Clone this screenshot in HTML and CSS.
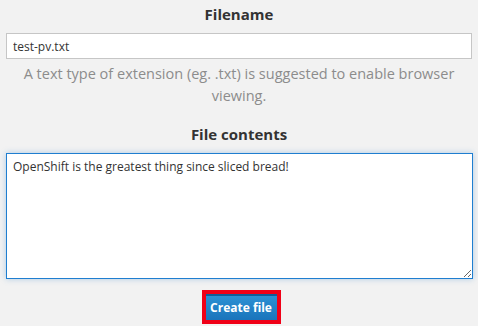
FILE: index.html
```html
<!DOCTYPE html>
<html lang="en">
<head>
    <meta charset="UTF-8">
    <meta name="viewport" content="width=device-width, initial-scale=1.0">
    <title>Create file</title>
    <link rel="stylesheet" href="styles.css">
</head>
<body>
    <div class="container">
        <div class="form-group">
            <label for="filename">Filename</label>
            <input type="text" id="filename" value="test-pv.txt">
            <p class="help">A text type of extension (eg. .txt) is suggested to enable browser viewing.</p>
        </div>

        <div class="form-group">
            <label for="contents">File contents</label>
            <textarea id="contents" autofocus>OpenShift is the greatest thing since sliced bread!</textarea>
        </div>

        <div class="actions">
            <button class="btn-create">Create file</button>
        </div>
    </div>
</body>
</html>
```

FILE: styles.css
```css
body {
    font-family: "Open Sans", Arial, sans-serif;
    margin: 0;
    padding: 0;
    background-color: #f2f2f2;
    color: #333;
}

.container {
    padding: 4px 6px 0 6px;
}

label {
    display: block;
    text-align: center;
    font-weight: bold;
    font-size: 15px;
    line-height: 20px;
    color: #333;
    margin-bottom: 9px;
}

input[type="text"] {
    display: block;
    box-sizing: border-box;
    width: 466px;
    height: 26px;
    margin: 0;
    padding: 2px 6px;
    border: 1px solid #c6c6c6;
    background: #fff;
    font-family: "Open Sans", Arial, sans-serif;
    font-size: 12px;
    color: #333;
    outline: none;
}

.help {
    margin: 4px 0 0 0;
    padding: 0 10px;
    text-align: center;
    font-size: 14.5px;
    line-height: 22px;
    color: #8c8c8c;
}

.form-group + .form-group {
    margin-top: 17px;
}

textarea {
    display: block;
    box-sizing: border-box;
    width: 467px;
    height: 126px;
    margin: 0;
    padding: 4px 6px;
    border: 1px solid #1f7ed0;
    background: #fff;
    font-family: "Open Sans", Arial, sans-serif;
    font-size: 12px;
    line-height: 18px;
    color: #333;
    resize: both;
    outline: none;
    box-shadow: 0 0 6px rgba(50, 130, 200, 0.35);
}

.actions {
    display: flex;
    justify-content: center;
    margin-top: 11px;
}

.btn-create {
    box-sizing: border-box;
    width: 79px;
    height: 34px;
    padding: 0;
    border: 4px solid #f00017;
    background: linear-gradient(#2d93d6, #1a74bb);
    box-shadow: inset 0 2px 0 #0f5d9a;
    color: #fff;
    font-family: "Open Sans", Arial, sans-serif;
    font-weight: bold;
    font-size: 12px;
    cursor: pointer;
    margin-left: 4px;
}
```
